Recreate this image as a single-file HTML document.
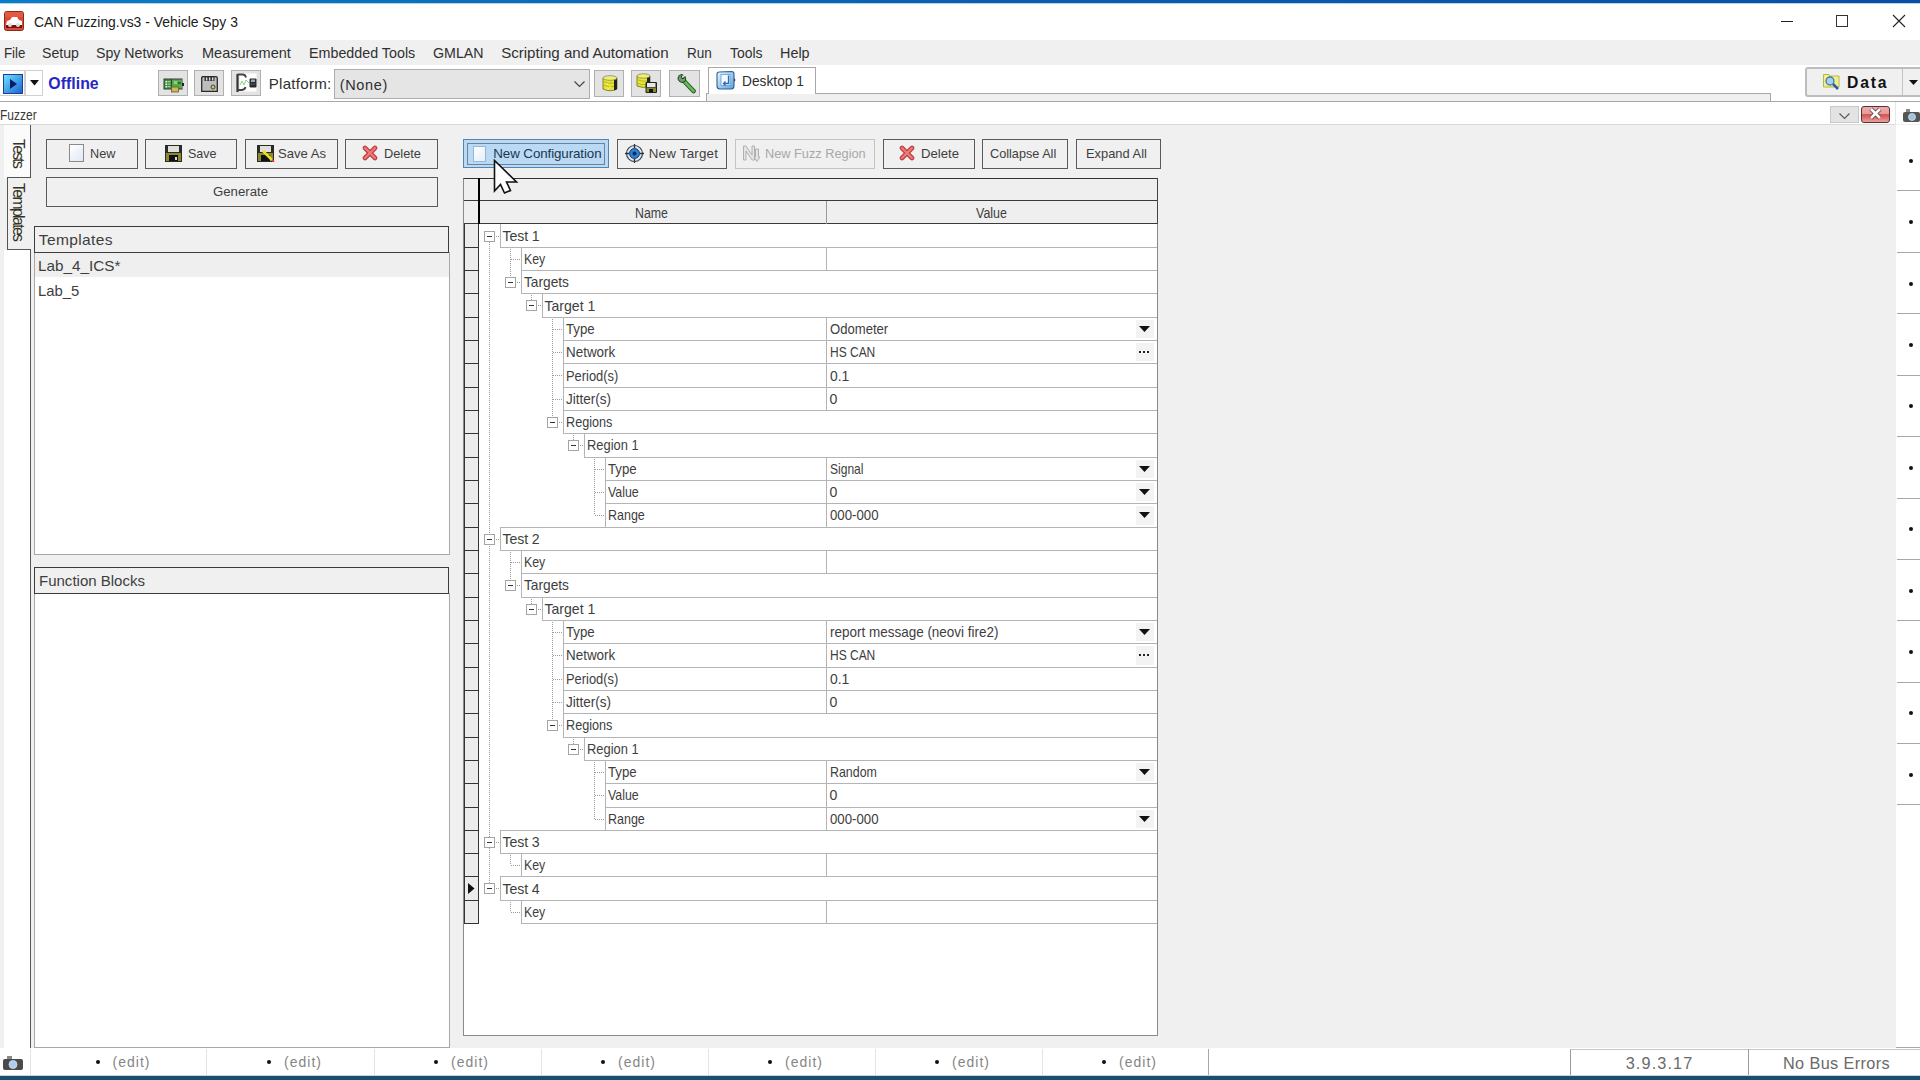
<!DOCTYPE html>
<html><head><meta charset="utf-8"><style>
html,body{margin:0;padding:0}
body{width:1920px;height:1080px;position:relative;overflow:hidden;background:#f0f0f0;font-family:"Liberation Sans",sans-serif}
.a{position:absolute}
.t{white-space:pre}
</style></head><body>
<div class="a" style="left:0px;top:0px;width:1920px;height:3px;background:linear-gradient(90deg,#0b7cc7,#0a5fb0 50%,#0a4ea6);"></div>
<div class="a" style="left:0px;top:3px;width:1920px;height:1px;background:#7fb4e0;opacity:.5"></div>
<div class="a" style="left:0px;top:4px;width:1920px;height:36px;background:#fff"></div>
<div class="a" style="left:0px;top:40px;width:1920px;height:25px;background:#f0f0f0"></div>
<div class="a" style="left:0px;top:65px;width:1920px;height:36px;background:#fff"></div>
<div class="a" style="left:0px;top:101px;width:1920px;height:1px;background:#a9a9a9"></div>
<div class="a" style="left:0px;top:102px;width:1920px;height:22px;background:#fff"></div>
<div class="a" style="left:0px;top:124px;width:1896px;height:1px;background:#dadada"></div>
<div class="a" style="left:0px;top:1048px;width:1920px;height:27px;background:#fff"></div>
<div class="a" style="left:0px;top:1075px;width:1920px;height:1px;background:#c9d3da"></div>
<div class="a" style="left:0px;top:1076px;width:1920px;height:4px;background:#1a4e6e"></div>
<svg class="a" style="left:4px;top:11px" width="20" height="20" viewBox="0 0 20 20">
<rect x="0.5" y="0.5" width="19" height="19" rx="2" fill="#dc4a38" stroke="#8a2a20" stroke-width="1"/>
<rect x="1" y="1" width="18" height="5" fill="#e45a40"/>
<path d="M2 14 L3 10 L6 9 L8 6 L13 6 L15 9 L18 10 L18 14 Z" fill="#fff"/>
<rect x="2" y="14" width="16" height="3" fill="#7a1010"/>
<circle cx="6" cy="14" r="2" fill="#ddd"/><circle cx="14" cy="14" r="2" fill="#ddd"/>
</svg>
<div class="a t" style="left:34.00px;top:14.00px;font-size:15.26px;line-height:15.26px;letter-spacing:0.000px;color:#1b1b1b;transform:scaleX(0.9111);transform-origin:0 0;">CAN Fuzzing.vs3 - Vehicle Spy 3</div>
<div class="a" style="left:1781px;top:21px;width:12px;height:1px;background:#222"></div>
<div class="a" style="left:1836px;top:15px;width:12px;height:12px;border:1px solid #333;box-sizing:border-box"></div>
<svg class="a" style="left:1892px;top:14px" width="14" height="14" viewBox="0 0 14 14"><path d="M1 1 L13 13 M13 1 L1 13" stroke="#222" stroke-width="1.1"/></svg>
<div class="a t" style="left:3.60px;top:45.00px;font-size:15.12px;line-height:15.12px;letter-spacing:0.000px;color:#303030;transform:scaleX(0.8784);transform-origin:0 0;">File</div>
<div class="a t" style="left:42.00px;top:45.00px;font-size:15.12px;line-height:15.12px;letter-spacing:0.000px;color:#303030;transform:scaleX(0.9365);transform-origin:0 0;">Setup</div>
<div class="a t" style="left:96.40px;top:45.00px;font-size:15.12px;line-height:15.12px;letter-spacing:0.000px;color:#303030;transform:scaleX(0.9382);transform-origin:0 0;">Spy Networks</div>
<div class="a t" style="left:202.10px;top:45.00px;font-size:15.12px;line-height:15.12px;letter-spacing:0.000px;color:#303030;transform:scaleX(0.9618);transform-origin:0 0;">Measurement</div>
<div class="a t" style="left:308.70px;top:45.00px;font-size:15.12px;line-height:15.12px;letter-spacing:0.000px;color:#303030;transform:scaleX(0.9461);transform-origin:0 0;">Embedded Tools</div>
<div class="a t" style="left:433.10px;top:45.00px;font-size:15.12px;line-height:15.12px;letter-spacing:0.000px;color:#303030;transform:scaleX(0.9411);transform-origin:0 0;">GMLAN</div>
<div class="a t" style="left:501.20px;top:45.00px;font-size:15.12px;line-height:15.12px;letter-spacing:-0.026px;color:#303030;">Scripting and Automation</div>
<div class="a t" style="left:686.70px;top:45.00px;font-size:15.12px;line-height:15.12px;letter-spacing:0.000px;color:#303030;transform:scaleX(0.8978);transform-origin:0 0;">Run</div>
<div class="a t" style="left:729.70px;top:45.00px;font-size:15.12px;line-height:15.12px;letter-spacing:0.000px;color:#303030;transform:scaleX(0.9236);transform-origin:0 0;">Tools</div>
<div class="a t" style="left:780.00px;top:45.00px;font-size:15.12px;line-height:15.12px;letter-spacing:0.000px;color:#303030;transform:scaleX(0.9519);transform-origin:0 0;">Help</div>
<div class="a" style="left:0px;top:70px;width:25px;height:26px;border:1px solid #d0d0d0;border-left:none;box-sizing:border-box;background:#fff"></div>
<div class="a" style="left:25px;top:70px;width:18px;height:26px;border:1px solid #d0d0d0;box-sizing:border-box;background:#fff"></div>
<svg class="a" style="left:3px;top:74px" width="20" height="20" viewBox="0 0 20 20">
<defs><linearGradient id="pg" x1="0" y1="0" x2="1" y2="1"><stop offset="0" stop-color="#6fe8ff"/><stop offset="1" stop-color="#1a5fd0"/></linearGradient></defs>
<rect x="0.5" y="0.5" width="19" height="19" fill="url(#pg)" stroke="#1a3f9a"/>
<path d="M7 5 L14 10 L7 15 Z" fill="#0a1a6a"/></svg>
<svg class="a" style="left:30px;top:80px" width="9" height="6" viewBox="0 0 9 6"><path d="M0 0 L9 0 L4.5 5.5 Z" fill="#111"/></svg>
<div class="a t" style="left:48.30px;top:76.00px;font-size:15.84px;line-height:15.84px;letter-spacing:0.041px;color:#2626c4;font-weight:bold;">Offline</div>
<div class="a" style="left:158px;top:70px;width:30px;height:26px;border:1px solid #b0b0b0;box-sizing:border-box;background:#e3e3e3"></div>
<div class="a" style="left:194px;top:70px;width:30px;height:26px;border:1px solid #b0b0b0;box-sizing:border-box;background:#e3e3e3"></div>
<div class="a" style="left:231px;top:70px;width:30px;height:26px;border:1px solid #b0b0b0;box-sizing:border-box;background:#e3e3e3"></div>
<svg class="a" style="left:163px;top:78px" width="22" height="15" viewBox="0 0 22 15">
<rect x="0.5" y="0.5" width="19" height="11" fill="#3a3a3a"/>
<rect x="1.5" y="1.5" width="6.5" height="9" fill="#3f8f3a"/>
<rect x="9" y="1.5" width="10" height="9" fill="#5aa84e"/>
<rect x="2.5" y="3" width="1.5" height="1.5" fill="#e8ffe8"/><rect x="2.5" y="5.5" width="1.5" height="1.5" fill="#e8ffe8"/><rect x="2.5" y="8" width="1.5" height="1.5" fill="#e8ffe8"/>
<rect x="4.5" y="3" width="3" height="1.2" fill="#9fd09a"/><rect x="4.5" y="5.5" width="3" height="1.2" fill="#9fd09a"/><rect x="4.5" y="8" width="3" height="1.2" fill="#9fd09a"/>
<rect x="11" y="3" width="3" height="3" fill="#8fcf80"/><rect x="15" y="4" width="3" height="2" fill="#2f6f2a"/>
<rect x="19" y="5" width="2" height="3" fill="#222"/>
<rect x="8.5" y="9" width="7" height="5" fill="#c8b860" stroke="#6a5a20" stroke-width=".8"/></svg>
<svg class="a" style="left:201px;top:76px" width="17" height="16" viewBox="0 0 17 16">
<path d="M1.5 0.7 H15 Q16.3 0.7 16.3 2 V15.3 H0.7 V1.5 Z" fill="#bdbdbd" stroke="#2a2a2a" stroke-width="1.3"/>
<rect x="3.5" y="1" width="10" height="4" fill="#3a3a3a"/><rect x="5" y="1.5" width="1.3" height="3" fill="#ddd"/><rect x="8" y="1.5" width="1.3" height="3" fill="#ddd"/><rect x="11" y="1.5" width="1.3" height="3" fill="#ddd"/>
<circle cx="12" cy="11" r="2" fill="#d8c850" stroke="#333" stroke-width=".9"/></svg>
<svg class="a" style="left:236px;top:73px" width="22" height="20" viewBox="0 0 22 20">
<rect x="3.5" y="0.5" width="17" height="18" fill="#fff"/>
<path d="M1.5 1 V19" stroke="#333" stroke-width="2.2"/>
<path d="M1.5 1.5 H7 Q9.5 1.8 10 4.5 M1.5 17 H6 Q9 16.5 9.5 14" stroke="#444" stroke-width="1.8" fill="none"/>
<path d="M4 12 L6 8 L8 12 L10 7 L13 10" stroke="#8ad08a" stroke-width="1" fill="none"/>
<rect x="13.5" y="5.5" width="7" height="9" rx="1" fill="#2a2a2a"/><rect x="15" y="6.5" width="4" height="2.5" fill="#9ab"/>
<rect x="15" y="10.5" width="1.2" height="1.2" fill="#68a"/><rect x="17.5" y="10.5" width="1.2" height="1.2" fill="#68a"/></svg>
<div class="a t" style="left:268.75px;top:76.00px;font-size:15.12px;line-height:15.12px;letter-spacing:0.251px;color:#303030;">Platform:</div>
<div class="a" style="left:334px;top:69px;width:256px;height:30px;border:1px solid #adadad;box-sizing:border-box;background:#e5e5e5"></div>
<div class="a t" style="left:339.80px;top:78.00px;font-size:14.53px;line-height:14.53px;letter-spacing:0.618px;color:#303030;">(None)</div>
<svg class="a" style="left:574px;top:81px" width="11" height="7" viewBox="0 0 11 7"><path d="M0.5 0.5 L5.5 5.5 L10.5 0.5" stroke="#444" stroke-width="1.2" fill="none"/></svg>
<div class="a" style="left:594px;top:70px;width:30px;height:27px;border:1px solid #b0b0b0;box-sizing:border-box;background:#e3e3e3"></div>
<div class="a" style="left:631px;top:70px;width:30px;height:27px;border:1px solid #b0b0b0;box-sizing:border-box;background:#e3e3e3"></div>
<div class="a" style="left:669px;top:70px;width:31px;height:27px;border:1px solid #b0b0b0;box-sizing:border-box;background:#e3e3e3"></div>
<svg class="a" style="left:602px;top:75px" width="16" height="17" viewBox="0 0 16 17">
<path d="M1 3 L1 14 Q8 17.5 15 14 L15 3 Z" fill="#e6e632" stroke="#5a5a10" stroke-width=".7"/>
<path d="M12 3.5 L15 3 L15 14 Q13.5 15 12 15.5 Z" fill="#222"/>
<ellipse cx="8" cy="3" rx="7" ry="2.3" fill="#f0f070" stroke="#777" stroke-width=".7"/>
<path d="M1 6.5 Q6 9 12 8 M1 10 Q6 12.5 12 11.5" stroke="#a8a820" stroke-width=".8" fill="none"/>
<path d="M4 8 L6 9.5 M7 11 L9 12.5 M5 12.5 L7 14" stroke="#fafa90" stroke-width=".9"/></svg>
<svg class="a" style="left:636px;top:73px" width="22" height="21" viewBox="0 0 22 21">
<path d="M1 3 L1 13 Q7 16 14 13 L14 3 Z" fill="#e6e632" stroke="#5a5a10" stroke-width=".7"/>
<path d="M11 3.5 L14 3 L14 13 L11 14 Z" fill="#222"/>
<ellipse cx="7.5" cy="3" rx="6.5" ry="2.2" fill="#f0f070" stroke="#777" stroke-width=".7"/>
<path d="M1 6.5 Q6 9 11 8 M1 10 Q6 12.5 11 11.5" stroke="#a8a820" stroke-width=".8" fill="none"/>
<rect x="9.5" y="9" width="11.5" height="11" rx="1" fill="#222"/>
<rect x="11" y="10" width="8.5" height="4" fill="#e8e8e8"/><rect x="10.5" y="14.5" width="9.5" height="4.5" fill="#8a8a2a"/>
<rect x="13" y="16" width="4" height="3" fill="#111"/></svg>
<svg class="a" style="left:676px;top:73px" width="20" height="21" viewBox="0 0 20 21">
<path d="M7 7 L17.5 18" stroke="#1f4a1a" stroke-width="4.6" stroke-linecap="round"/>
<path d="M7 7 L17.5 18" stroke="#62b85a" stroke-width="3" stroke-linecap="round"/>
<path d="M2.5 3 Q1 6.5 3.5 8.5 Q6 10.5 9 8.5 Q10.5 6 9 3.5 L7 6 L5 4.5 L6.5 1.5 Q4 1.5 2.5 3 Z" fill="#5ab050" stroke="#333" stroke-width="1"/>
<path d="M2.5 3 L4 4.5 M6.5 1.5 L7 3" stroke="#777" stroke-width="1.2"/></svg>
<div class="a" style="left:706px;top:93px;width:1065px;height:8px;border:1px solid #a8a8a8;border-bottom:none;box-sizing:border-box;background:#f0f0f0"></div>
<div class="a" style="left:708px;top:67px;width:108px;height:27px;border:1px solid #a8a8a8;border-bottom:none;box-sizing:border-box;background:#fff"></div>
<svg class="a" style="left:716px;top:70px" width="20" height="21" viewBox="0 0 20 21">
<defs><linearGradient id="dg" x1="0" y1="0" x2="1" y2="1"><stop offset="0" stop-color="#eef8ff"/><stop offset="1" stop-color="#5aa0dc"/></linearGradient></defs>
<path d="M3 2 Q1 2 1 4.5 V16 Q1 19 4 19 H15 Q18 19 18 16 V4 Q18 1.5 15.5 1.5 Z" fill="url(#dg)" stroke="#2a5f9a" stroke-width="1.1"/>
<rect x="5" y="4.5" width="9" height="11" fill="#f4f9ff" stroke="#6a9ad0" stroke-width=".8"/>
<path d="M12.5 5.5 V13.5 H8 M9.5 11.5 L7.5 13.5 L9.5 15.5" stroke="#2a6ab8" stroke-width="1.3" fill="none"/>
<path d="M18 8 L19.5 10 L18 12" fill="#335" /></svg>
<div class="a t" style="left:742.20px;top:74.00px;font-size:14.97px;line-height:14.97px;letter-spacing:0.000px;color:#303030;transform:scaleX(0.9184);transform-origin:0 0;">Desktop 1</div>
<div class="a" style="left:1805px;top:67px;width:125px;height:30px;border:2px solid #bdbdbd;border-radius:3px;box-sizing:border-box;background:#f0f0f0"></div>
<div class="a" style="left:1902px;top:69px;width:1px;height:26px;background:#c4c4c4"></div>
<svg class="a" style="left:1909px;top:80px" width="9" height="5" viewBox="0 0 9 5"><path d="M0 0 L9 0 L4.5 5 Z" fill="#111"/></svg>
<svg class="a" style="left:1823px;top:73px" width="18" height="18" viewBox="0 0 18 18">
<path d="M0.5 1.5 L6 1.5 L7 3 L16 3 L16 14 L0.5 14 Z" fill="#f0f090" stroke="#b8b840" stroke-width="1"/>
<circle cx="7" cy="8" r="4" fill="#a8d0f0" stroke="#4a7a9a" stroke-width="1.3"/>
<path d="M10 11 L15 16" stroke="#2a5ab0" stroke-width="2.5"/></svg>
<div class="a t" style="left:1847.00px;top:75.00px;font-size:15.70px;line-height:15.70px;letter-spacing:1.824px;color:#111;font-weight:bold;">Data</div>
<div class="a t" style="left:0.00px;top:108.00px;font-size:14.83px;line-height:14.83px;letter-spacing:0.000px;color:#3a3a3a;transform:scaleX(0.8098);transform-origin:0 0;">Fuzzer</div>
<div class="a" style="left:1830px;top:106px;width:29px;height:17px;border:1px solid #c8c8c8;box-sizing:border-box;background:#e3e3e3"></div>
<svg class="a" style="left:1839px;top:113px" width="11" height="7" viewBox="0 0 11 7"><path d="M0.5 0.5 L5.5 5.5 L10.5 0.5" stroke="#555" stroke-width="1.1" fill="none"/></svg>
<div class="a" style="left:1861px;top:106px;width:29px;height:17px;border:1px solid #5a3030;border-radius:3px;box-sizing:border-box;background:linear-gradient(#eeaaaa,#e79a9a 45%,#d45a5a 50%,#d86060 62%,#eaa0a0)"></div>
<svg class="a" style="left:1868px;top:107px" width="15" height="13" viewBox="0 0 15 13"><path d="M3 2 L12 11 M12 2 L3 11" stroke="#5a3a3a" stroke-width="4.2"/><path d="M3 2 L12 11 M12 2 L3 11" stroke="#fff" stroke-width="2.6"/></svg>
<div class="a" style="left:1895px;top:102px;width:1px;height:23px;background:#e6e6e6"></div>
<svg class="a" style="left:1903px;top:109px" width="17" height="14" viewBox="0 0 17 14">
<rect x="3" y="0" width="4" height="3" fill="#888"/><rect x="0" y="3" width="17" height="10" rx="2" fill="#555"/>
<circle cx="9" cy="8" r="3.5" fill="#9cc4e8" stroke="#ddd" stroke-width=".8"/></svg>
<div class="a" style="left:4px;top:125px;width:26px;height:53px;background:#fbfbfb"></div>
<div class="a" style="left:30px;top:125px;width:1px;height:53px;background:#555"></div>
<div class="a" style="left:7px;top:177px;width:24px;height:1px;background:#555"></div>
<div class="a" style="left:7px;top:177px;width:1px;height:73px;background:#555"></div>
<div class="a" style="left:8px;top:178px;width:23px;height:71px;background:#f0f0f0"></div>
<div class="a" style="left:7px;top:249px;width:24px;height:1px;background:#555"></div>
<div class="a" style="left:4px;top:250px;width:26px;height:798px;background:#fff"></div>
<div class="a" style="left:30px;top:250px;width:1px;height:798px;background:#555"></div>
<div class="a t" style="left:26.09px;top:139.40px;transform:rotate(90deg);transform-origin:0 0;font-size:15.70px;line-height:15.70px;letter-spacing:-1.686px;color:#33331f;">Tests</div>
<div class="a t" style="left:26.09px;top:183.20px;transform:rotate(90deg);transform-origin:0 0;font-size:15.70px;line-height:15.70px;letter-spacing:-1.569px;color:#33331f;">Templates</div>
<div class="a" style="left:46px;top:139px;width:92px;height:30px;border:1px solid #5a5a5a;background:#f0f0f0;box-sizing:border-box"></div>
<div class="a" style="left:145px;top:139px;width:92px;height:30px;border:1px solid #5a5a5a;background:#f0f0f0;box-sizing:border-box"></div>
<div class="a" style="left:245px;top:139px;width:93px;height:30px;border:1px solid #5a5a5a;background:#f0f0f0;box-sizing:border-box"></div>
<div class="a" style="left:345px;top:139px;width:93px;height:30px;border:1px solid #5a5a5a;background:#f0f0f0;box-sizing:border-box"></div>
<div class="a" style="left:46px;top:177px;width:392px;height:30px;border:1px solid #5a5a5a;background:#f0f0f0;box-sizing:border-box"></div>
<div class="a" style="left:69px;top:144px;width:15px;height:18px;border:1px solid #8a8a8a;box-sizing:border-box;background:linear-gradient(135deg,#ffffff,#dfe8f4)"></div>
<div class="a t" style="left:90.40px;top:147.00px;font-size:13.37px;line-height:13.37px;letter-spacing:0.000px;color:#3e3e3e;transform:scaleX(0.9497);transform-origin:0 0;">New</div>
<svg class="a" style="left:165px;top:145px" width="17" height="17" viewBox="0 0 17 17">
<rect x="0" y="0" width="17" height="17" fill="#2a2a2a"/><rect x="1" y="8" width="15" height="8" fill="#8a8a2a"/>
<rect x="3" y="1" width="11" height="6" fill="#e0e0d8"/><rect x="4" y="10" width="9" height="6" fill="#111"/>
<rect x="10" y="12" width="2" height="3" fill="#ddd"/></svg>
<div class="a t" style="left:187.50px;top:147.00px;font-size:13.37px;line-height:13.37px;letter-spacing:0.000px;color:#3e3e3e;transform:scaleX(0.9352);transform-origin:0 0;">Save</div>
<svg class="a" style="left:257px;top:145px" width="18" height="17" viewBox="0 0 18 17">
<rect x="0" y="0" width="17" height="17" fill="#2a2a2a"/><rect x="1" y="8" width="15" height="8" fill="#8a8a2a"/>
<rect x="3" y="1" width="11" height="6" fill="#e0e0d8"/><rect x="4" y="10" width="9" height="6" fill="#111"/>
<path d="M6 6 L15 15" stroke="#e8e020" stroke-width="2.5"/><path d="M15 15 L17 17" stroke="#e04040" stroke-width="2"/></svg>
<div class="a t" style="left:278.00px;top:147.00px;font-size:13.37px;line-height:13.37px;letter-spacing:0.000px;color:#3e3e3e;transform:scaleX(0.9785);transform-origin:0 0;">Save As</div>
<svg class="a" style="left:362px;top:145px" width="16" height="16" viewBox="0 0 16 16">
<path d="M3 3 L13 13 M13 3 L3 13" stroke="#c04040" stroke-width="4.6" stroke-linecap="round"/>
<path d="M3 3 L13 13 M13 3 L3 13" stroke="#ee7a7a" stroke-width="2.2" stroke-linecap="round"/></svg>
<div class="a t" style="left:384.00px;top:147.00px;font-size:13.37px;line-height:13.37px;letter-spacing:0.000px;color:#3e3e3e;transform:scaleX(0.9574);transform-origin:0 0;">Delete</div>
<div class="a t" style="left:213.00px;top:185.00px;font-size:13.66px;line-height:13.66px;letter-spacing:0.000px;color:#3e3e3e;transform:scaleX(0.9658);transform-origin:0 0;">Generate</div>
<div class="a" style="left:34px;top:252px;width:416px;height:303px;border:1px solid #a8a8a8;border-top:none;box-sizing:border-box;background:#fff"></div>
<div class="a" style="left:35px;top:253px;width:414px;height:24px;background:#efefef"></div>
<div class="a" style="left:34px;top:226px;width:415px;height:27px;border:1px solid #3c3c3c;box-sizing:border-box;background:#f0f0f0"></div>
<div class="a t" style="left:38.75px;top:232.00px;font-size:15.55px;line-height:15.55px;letter-spacing:0.360px;color:#3e3e3e;">Templates</div>
<div class="a t" style="left:37.50px;top:258.00px;font-size:15.55px;line-height:15.55px;letter-spacing:0.000px;color:#3e3e3e;transform:scaleX(0.9838);transform-origin:0 0;">Lab_4_ICS*</div>
<div class="a t" style="left:37.50px;top:283.00px;font-size:15.55px;line-height:15.55px;letter-spacing:0.000px;color:#3e3e3e;transform:scaleX(0.9541);transform-origin:0 0;">Lab_5</div>
<div class="a" style="left:34px;top:593px;width:416px;height:455px;border:1px solid #a8a8a8;border-top:none;box-sizing:border-box;background:#fff"></div>
<div class="a" style="left:34px;top:567px;width:415px;height:27px;border:1px solid #3c3c3c;box-sizing:border-box;background:#f0f0f0"></div>
<div class="a t" style="left:39.00px;top:573.00px;font-size:15.55px;line-height:15.55px;letter-spacing:0.000px;color:#3e3e3e;transform:scaleX(0.9658);transform-origin:0 0;">Function Blocks</div>
<div class="a" style="left:463px;top:139px;width:146px;height:29px;border:1px solid #4f86b8;background:#b9d9f5;box-sizing:border-box"></div>
<div class="a" style="left:467px;top:143px;width:138px;height:22px;border:1px solid rgba(50,60,70,.55);box-sizing:border-box"></div>
<div class="a" style="left:473px;top:146px;width:13px;height:16px;border:1px solid #9ab8d4;box-sizing:border-box;background:linear-gradient(135deg,#fff,#e6eef8)"></div>
<div class="a t" style="left:493.30px;top:147.00px;font-size:13.37px;line-height:13.37px;letter-spacing:-0.099px;color:#1c3550;">New Configuration</div>
<div class="a" style="left:617px;top:139px;width:110px;height:30px;border:1px solid #5a5a5a;background:#f0f0f0;box-sizing:border-box"></div>
<svg class="a" style="left:625px;top:144px" width="19" height="19" viewBox="0 0 19 19">
<circle cx="9.5" cy="9.5" r="8" fill="#dfe8f0" stroke="#3a4a5a" stroke-width="1.2"/>
<circle cx="9.5" cy="9.5" r="5" fill="#2f7fd0" stroke="#1a3a6a" stroke-width="1"/>
<circle cx="9.5" cy="9.5" r="2" fill="#0a2a6a"/>
<path d="M9.5 0 V4 M9.5 15 V19 M0 9.5 H4 M15 9.5 H19" stroke="#333" stroke-width="1.3"/></svg>
<div class="a t" style="left:648.75px;top:147.00px;font-size:13.37px;line-height:13.37px;letter-spacing:0.208px;color:#3e3e3e;">New Target</div>
<div class="a" style="left:735px;top:139px;width:140px;height:30px;border:1px solid #c4c4c4;background:#f0f0f0;box-sizing:border-box"></div>
<svg class="a" style="left:742px;top:145px" width="18" height="18" viewBox="0 0 18 18">
<path d="M1.5 1 H4 L10 10 V1 H12.5 V15 H10 L4 6 V15 H1.5 Z" fill="#e4e4e4" stroke="#b0b0b0" stroke-width="1"/>
<path d="M13.5 4 V12 H12 L15 16.5 L18 12 H16.5 V4 Z" fill="#e4e4e4" stroke="#b0b0b0" stroke-width="1"/></svg>
<div class="a t" style="left:765.00px;top:147.00px;font-size:13.37px;line-height:13.37px;letter-spacing:0.000px;color:#a8a8a8;transform:scaleX(0.9553);transform-origin:0 0;">New Fuzz Region</div>
<div class="a" style="left:883px;top:139px;width:92px;height:30px;border:1px solid #5a5a5a;background:#f0f0f0;box-sizing:border-box"></div>
<svg class="a" style="left:899px;top:145px" width="16" height="16" viewBox="0 0 16 16">
<path d="M3 3 L13 13 M13 3 L3 13" stroke="#c04040" stroke-width="4.6" stroke-linecap="round"/>
<path d="M3 3 L13 13 M13 3 L3 13" stroke="#ee7a7a" stroke-width="2.2" stroke-linecap="round"/></svg>
<div class="a t" style="left:921.00px;top:147.00px;font-size:13.37px;line-height:13.37px;letter-spacing:0.000px;color:#3e3e3e;transform:scaleX(0.9833);transform-origin:0 0;">Delete</div>
<div class="a" style="left:982px;top:139px;width:86px;height:30px;border:1px solid #5a5a5a;background:#f0f0f0;box-sizing:border-box"></div>
<div class="a t" style="left:990.00px;top:147.00px;font-size:13.37px;line-height:13.37px;letter-spacing:0.000px;color:#3e3e3e;transform:scaleX(0.9491);transform-origin:0 0;">Collapse All</div>
<div class="a" style="left:1076px;top:139px;width:85px;height:30px;border:1px solid #5a5a5a;background:#f0f0f0;box-sizing:border-box"></div>
<div class="a t" style="left:1085.60px;top:147.00px;font-size:13.37px;line-height:13.37px;letter-spacing:0.000px;color:#3e3e3e;transform:scaleX(0.9639);transform-origin:0 0;">Expand All</div>
<div class="a" style="left:463px;top:178px;width:695px;height:858px;border:1px solid #8a8a8a;border-top:1px solid #333;box-sizing:border-box;background:#fff"></div>
<div class="a" style="left:1157px;top:178px;width:1px;height:46px;background:#444"></div>
<div class="a" style="left:464px;top:179px;width:693px;height:21px;background:#efefef"></div>
<div class="a" style="left:464px;top:200px;width:693px;height:1px;background:#3a3a3a"></div>
<div class="a" style="left:479px;top:201px;width:678px;height:23px;background:#efefef"></div>
<div class="a" style="left:464px;top:201px;width:14px;height:23px;background:#efefef"></div>
<div class="a" style="left:464px;top:223px;width:693px;height:1px;background:#3a3a3a"></div>
<div class="a" style="left:478px;top:178px;width:2px;height:46px;background:#000"></div>
<div class="a" style="left:826px;top:201px;width:1px;height:23px;background:#9a9a9a"></div>
<div class="a t" style="left:635.00px;top:207.00px;font-size:13.95px;line-height:13.95px;letter-spacing:0.000px;color:#3e3e3e;transform:scaleX(0.8869);transform-origin:0 0;">Name</div>
<div class="a t" style="left:975.50px;top:207.00px;font-size:13.95px;line-height:13.95px;letter-spacing:0.000px;color:#3e3e3e;transform:scaleX(0.8949);transform-origin:0 0;">Value</div>
<div class="a" style="left:465px;top:224px;width:13px;height:23px;background:#ececec"></div>
<div class="a" style="left:465px;top:247px;width:13px;height:23px;background:#ececec"></div>
<div class="a" style="left:465px;top:270px;width:13px;height:23px;background:#ececec"></div>
<div class="a" style="left:465px;top:293px;width:13px;height:24px;background:#ececec"></div>
<div class="a" style="left:465px;top:317px;width:13px;height:23px;background:#ececec"></div>
<div class="a" style="left:465px;top:340px;width:13px;height:23px;background:#ececec"></div>
<div class="a" style="left:465px;top:363px;width:13px;height:24px;background:#ececec"></div>
<div class="a" style="left:465px;top:387px;width:13px;height:23px;background:#ececec"></div>
<div class="a" style="left:465px;top:410px;width:13px;height:23px;background:#ececec"></div>
<div class="a" style="left:465px;top:433px;width:13px;height:24px;background:#ececec"></div>
<div class="a" style="left:465px;top:457px;width:13px;height:23px;background:#ececec"></div>
<div class="a" style="left:465px;top:480px;width:13px;height:23px;background:#ececec"></div>
<div class="a" style="left:465px;top:503px;width:13px;height:24px;background:#ececec"></div>
<div class="a" style="left:465px;top:527px;width:13px;height:23px;background:#ececec"></div>
<div class="a" style="left:465px;top:550px;width:13px;height:23px;background:#ececec"></div>
<div class="a" style="left:465px;top:573px;width:13px;height:24px;background:#ececec"></div>
<div class="a" style="left:465px;top:597px;width:13px;height:23px;background:#ececec"></div>
<div class="a" style="left:465px;top:620px;width:13px;height:23px;background:#ececec"></div>
<div class="a" style="left:465px;top:643px;width:13px;height:24px;background:#ececec"></div>
<div class="a" style="left:465px;top:667px;width:13px;height:23px;background:#ececec"></div>
<div class="a" style="left:465px;top:690px;width:13px;height:23px;background:#ececec"></div>
<div class="a" style="left:465px;top:713px;width:13px;height:24px;background:#ececec"></div>
<div class="a" style="left:465px;top:737px;width:13px;height:23px;background:#ececec"></div>
<div class="a" style="left:465px;top:760px;width:13px;height:23px;background:#ececec"></div>
<div class="a" style="left:465px;top:783px;width:13px;height:24px;background:#ececec"></div>
<div class="a" style="left:465px;top:807px;width:13px;height:23px;background:#ececec"></div>
<div class="a" style="left:465px;top:830px;width:13px;height:23px;background:#ececec"></div>
<div class="a" style="left:465px;top:853px;width:13px;height:23px;background:#ececec"></div>
<div class="a" style="left:465px;top:876px;width:13px;height:24px;background:#ececec"></div>
<div class="a" style="left:465px;top:900px;width:13px;height:23px;background:#ececec"></div>
<div class="a" style="left:464px;top:247px;width:15px;height:1px;background:#333"></div>
<div class="a" style="left:464px;top:270px;width:15px;height:1px;background:#333"></div>
<div class="a" style="left:464px;top:293px;width:15px;height:1px;background:#333"></div>
<div class="a" style="left:464px;top:317px;width:15px;height:1px;background:#333"></div>
<div class="a" style="left:464px;top:340px;width:15px;height:1px;background:#333"></div>
<div class="a" style="left:464px;top:363px;width:15px;height:1px;background:#333"></div>
<div class="a" style="left:464px;top:387px;width:15px;height:1px;background:#333"></div>
<div class="a" style="left:464px;top:410px;width:15px;height:1px;background:#333"></div>
<div class="a" style="left:464px;top:433px;width:15px;height:1px;background:#333"></div>
<div class="a" style="left:464px;top:457px;width:15px;height:1px;background:#333"></div>
<div class="a" style="left:464px;top:480px;width:15px;height:1px;background:#333"></div>
<div class="a" style="left:464px;top:503px;width:15px;height:1px;background:#333"></div>
<div class="a" style="left:464px;top:527px;width:15px;height:1px;background:#333"></div>
<div class="a" style="left:464px;top:550px;width:15px;height:1px;background:#333"></div>
<div class="a" style="left:464px;top:573px;width:15px;height:1px;background:#333"></div>
<div class="a" style="left:464px;top:597px;width:15px;height:1px;background:#333"></div>
<div class="a" style="left:464px;top:620px;width:15px;height:1px;background:#333"></div>
<div class="a" style="left:464px;top:643px;width:15px;height:1px;background:#333"></div>
<div class="a" style="left:464px;top:667px;width:15px;height:1px;background:#333"></div>
<div class="a" style="left:464px;top:690px;width:15px;height:1px;background:#333"></div>
<div class="a" style="left:464px;top:713px;width:15px;height:1px;background:#333"></div>
<div class="a" style="left:464px;top:737px;width:15px;height:1px;background:#333"></div>
<div class="a" style="left:464px;top:760px;width:15px;height:1px;background:#333"></div>
<div class="a" style="left:464px;top:783px;width:15px;height:1px;background:#333"></div>
<div class="a" style="left:464px;top:807px;width:15px;height:1px;background:#333"></div>
<div class="a" style="left:464px;top:830px;width:15px;height:1px;background:#333"></div>
<div class="a" style="left:464px;top:853px;width:15px;height:1px;background:#333"></div>
<div class="a" style="left:464px;top:876px;width:15px;height:1px;background:#333"></div>
<div class="a" style="left:464px;top:900px;width:15px;height:1px;background:#333"></div>
<div class="a" style="left:464px;top:923px;width:15px;height:1px;background:#333"></div>
<div class="a" style="left:464px;top:224px;width:1px;height:700px;background:#333"></div>
<div class="a" style="left:478px;top:224px;width:1px;height:700px;background:#333"></div>
<svg class="a" style="left:468px;top:883px" width="7" height="11" viewBox="0 0 7 11"><path d="M0 0 L6.5 5.5 L0 11 Z" fill="#111"/></svg>
<div class="a" style="left:489px;top:236px;width:1px;height:652px;background:repeating-linear-gradient(180deg,#9a9a9a 0 1px,transparent 1px 2px)"></div>
<div class="a" style="left:510px;top:249px;width:1px;height:33px;background:repeating-linear-gradient(180deg,#9a9a9a 0 1px,transparent 1px 2px)"></div>
<div class="a" style="left:531px;top:295px;width:1px;height:10px;background:repeating-linear-gradient(180deg,#9a9a9a 0 1px,transparent 1px 2px)"></div>
<div class="a" style="left:552px;top:319px;width:1px;height:103px;background:repeating-linear-gradient(180deg,#9a9a9a 0 1px,transparent 1px 2px)"></div>
<div class="a" style="left:573px;top:435px;width:1px;height:10px;background:repeating-linear-gradient(180deg,#9a9a9a 0 1px,transparent 1px 2px)"></div>
<div class="a" style="left:594px;top:459px;width:1px;height:56px;background:repeating-linear-gradient(180deg,#9a9a9a 0 1px,transparent 1px 2px)"></div>
<div class="a" style="left:510px;top:552px;width:1px;height:33px;background:repeating-linear-gradient(180deg,#9a9a9a 0 1px,transparent 1px 2px)"></div>
<div class="a" style="left:531px;top:599px;width:1px;height:10px;background:repeating-linear-gradient(180deg,#9a9a9a 0 1px,transparent 1px 2px)"></div>
<div class="a" style="left:552px;top:622px;width:1px;height:103px;background:repeating-linear-gradient(180deg,#9a9a9a 0 1px,transparent 1px 2px)"></div>
<div class="a" style="left:573px;top:739px;width:1px;height:10px;background:repeating-linear-gradient(180deg,#9a9a9a 0 1px,transparent 1px 2px)"></div>
<div class="a" style="left:594px;top:762px;width:1px;height:57px;background:repeating-linear-gradient(180deg,#9a9a9a 0 1px,transparent 1px 2px)"></div>
<div class="a" style="left:510px;top:855px;width:1px;height:10px;background:repeating-linear-gradient(180deg,#9a9a9a 0 1px,transparent 1px 2px)"></div>
<div class="a" style="left:510px;top:902px;width:1px;height:10px;background:repeating-linear-gradient(180deg,#9a9a9a 0 1px,transparent 1px 2px)"></div>
<div class="a" style="left:490px;top:236px;width:10px;height:1px;background:repeating-linear-gradient(90deg,#9a9a9a 0 1px,transparent 1px 2px)"></div>
<div class="a" style="left:511px;top:259px;width:10px;height:1px;background:repeating-linear-gradient(90deg,#9a9a9a 0 1px,transparent 1px 2px)"></div>
<div class="a" style="left:511px;top:282px;width:10px;height:1px;background:repeating-linear-gradient(90deg,#9a9a9a 0 1px,transparent 1px 2px)"></div>
<div class="a" style="left:532px;top:305px;width:10px;height:1px;background:repeating-linear-gradient(90deg,#9a9a9a 0 1px,transparent 1px 2px)"></div>
<div class="a" style="left:553px;top:329px;width:10px;height:1px;background:repeating-linear-gradient(90deg,#9a9a9a 0 1px,transparent 1px 2px)"></div>
<div class="a" style="left:553px;top:352px;width:10px;height:1px;background:repeating-linear-gradient(90deg,#9a9a9a 0 1px,transparent 1px 2px)"></div>
<div class="a" style="left:553px;top:375px;width:10px;height:1px;background:repeating-linear-gradient(90deg,#9a9a9a 0 1px,transparent 1px 2px)"></div>
<div class="a" style="left:553px;top:399px;width:10px;height:1px;background:repeating-linear-gradient(90deg,#9a9a9a 0 1px,transparent 1px 2px)"></div>
<div class="a" style="left:553px;top:422px;width:10px;height:1px;background:repeating-linear-gradient(90deg,#9a9a9a 0 1px,transparent 1px 2px)"></div>
<div class="a" style="left:574px;top:445px;width:10px;height:1px;background:repeating-linear-gradient(90deg,#9a9a9a 0 1px,transparent 1px 2px)"></div>
<div class="a" style="left:595px;top:469px;width:10px;height:1px;background:repeating-linear-gradient(90deg,#9a9a9a 0 1px,transparent 1px 2px)"></div>
<div class="a" style="left:595px;top:492px;width:10px;height:1px;background:repeating-linear-gradient(90deg,#9a9a9a 0 1px,transparent 1px 2px)"></div>
<div class="a" style="left:595px;top:515px;width:10px;height:1px;background:repeating-linear-gradient(90deg,#9a9a9a 0 1px,transparent 1px 2px)"></div>
<div class="a" style="left:490px;top:539px;width:10px;height:1px;background:repeating-linear-gradient(90deg,#9a9a9a 0 1px,transparent 1px 2px)"></div>
<div class="a" style="left:511px;top:562px;width:10px;height:1px;background:repeating-linear-gradient(90deg,#9a9a9a 0 1px,transparent 1px 2px)"></div>
<div class="a" style="left:511px;top:585px;width:10px;height:1px;background:repeating-linear-gradient(90deg,#9a9a9a 0 1px,transparent 1px 2px)"></div>
<div class="a" style="left:532px;top:609px;width:10px;height:1px;background:repeating-linear-gradient(90deg,#9a9a9a 0 1px,transparent 1px 2px)"></div>
<div class="a" style="left:553px;top:632px;width:10px;height:1px;background:repeating-linear-gradient(90deg,#9a9a9a 0 1px,transparent 1px 2px)"></div>
<div class="a" style="left:553px;top:655px;width:10px;height:1px;background:repeating-linear-gradient(90deg,#9a9a9a 0 1px,transparent 1px 2px)"></div>
<div class="a" style="left:553px;top:679px;width:10px;height:1px;background:repeating-linear-gradient(90deg,#9a9a9a 0 1px,transparent 1px 2px)"></div>
<div class="a" style="left:553px;top:702px;width:10px;height:1px;background:repeating-linear-gradient(90deg,#9a9a9a 0 1px,transparent 1px 2px)"></div>
<div class="a" style="left:553px;top:725px;width:10px;height:1px;background:repeating-linear-gradient(90deg,#9a9a9a 0 1px,transparent 1px 2px)"></div>
<div class="a" style="left:574px;top:749px;width:10px;height:1px;background:repeating-linear-gradient(90deg,#9a9a9a 0 1px,transparent 1px 2px)"></div>
<div class="a" style="left:595px;top:772px;width:10px;height:1px;background:repeating-linear-gradient(90deg,#9a9a9a 0 1px,transparent 1px 2px)"></div>
<div class="a" style="left:595px;top:795px;width:10px;height:1px;background:repeating-linear-gradient(90deg,#9a9a9a 0 1px,transparent 1px 2px)"></div>
<div class="a" style="left:595px;top:819px;width:10px;height:1px;background:repeating-linear-gradient(90deg,#9a9a9a 0 1px,transparent 1px 2px)"></div>
<div class="a" style="left:490px;top:842px;width:10px;height:1px;background:repeating-linear-gradient(90deg,#9a9a9a 0 1px,transparent 1px 2px)"></div>
<div class="a" style="left:511px;top:865px;width:10px;height:1px;background:repeating-linear-gradient(90deg,#9a9a9a 0 1px,transparent 1px 2px)"></div>
<div class="a" style="left:490px;top:888px;width:10px;height:1px;background:repeating-linear-gradient(90deg,#9a9a9a 0 1px,transparent 1px 2px)"></div>
<div class="a" style="left:511px;top:912px;width:10px;height:1px;background:repeating-linear-gradient(90deg,#9a9a9a 0 1px,transparent 1px 2px)"></div>
<div class="a" style="left:500px;top:224px;width:657px;height:24px;border-left:1px solid #b4b4b4;border-bottom:1px solid #b4b4b4;box-sizing:border-box"></div>
<div class="a" style="left:484px;top:231px;width:11px;height:11px;border:1px solid #a4a4a4;box-sizing:border-box;background:#fff"></div>
<div class="a" style="left:487px;top:236px;width:5px;height:1px;background:#333"></div>
<div class="a t" style="left:502.50px;top:229.00px;font-size:14.10px;line-height:14.10px;letter-spacing:-0.083px;color:#3e3e3e;">Test 1</div>
<div class="a" style="left:521px;top:247px;width:636px;height:24px;border-left:1px solid #b4b4b4;border-bottom:1px solid #b4b4b4;box-sizing:border-box"></div>
<div class="a t" style="left:523.50px;top:252.00px;font-size:14.10px;line-height:14.10px;letter-spacing:0.000px;color:#3e3e3e;transform:scaleX(0.8746);transform-origin:0 0;">Key</div>
<div class="a" style="left:826px;top:247px;width:1px;height:23px;background:#b4b4b4"></div>
<div class="a" style="left:521px;top:270px;width:636px;height:24px;border-left:1px solid #b4b4b4;border-bottom:1px solid #b4b4b4;box-sizing:border-box"></div>
<div class="a" style="left:505px;top:277px;width:11px;height:11px;border:1px solid #a4a4a4;box-sizing:border-box;background:#fff"></div>
<div class="a" style="left:508px;top:282px;width:5px;height:1px;background:#333"></div>
<div class="a t" style="left:523.50px;top:275.00px;font-size:14.10px;line-height:14.10px;letter-spacing:0.000px;color:#3e3e3e;transform:scaleX(0.9733);transform-origin:0 0;">Targets</div>
<div class="a" style="left:542px;top:293px;width:615px;height:25px;border-left:1px solid #b4b4b4;border-bottom:1px solid #b4b4b4;box-sizing:border-box"></div>
<div class="a" style="left:526px;top:300px;width:11px;height:11px;border:1px solid #a4a4a4;box-sizing:border-box;background:#fff"></div>
<div class="a" style="left:529px;top:305px;width:5px;height:1px;background:#333"></div>
<div class="a t" style="left:544.50px;top:299.00px;font-size:14.10px;line-height:14.10px;letter-spacing:-0.020px;color:#3e3e3e;">Target 1</div>
<div class="a" style="left:563px;top:317px;width:594px;height:24px;border-left:1px solid #b4b4b4;border-bottom:1px solid #b4b4b4;box-sizing:border-box"></div>
<div class="a t" style="left:565.50px;top:322.00px;font-size:14.10px;line-height:14.10px;letter-spacing:0.000px;color:#3e3e3e;transform:scaleX(0.9389);transform-origin:0 0;">Type</div>
<div class="a" style="left:826px;top:317px;width:1px;height:23px;background:#b4b4b4"></div>
<div class="a t" style="left:829.60px;top:322.00px;font-size:14.10px;line-height:14.10px;letter-spacing:0.000px;color:#3e3e3e;transform:scaleX(0.9284);transform-origin:0 0;">Odometer</div>
<div class="a" style="left:1136px;top:320px;width:18px;height:18px;background:#f3f3f3"></div>
<svg class="a" style="left:1139px;top:326px" width="11" height="6" viewBox="0 0 11 6"><path d="M0 0 L11 0 L5.5 6 Z" fill="#111"/></svg>
<div class="a" style="left:563px;top:340px;width:594px;height:24px;border-left:1px solid #b4b4b4;border-bottom:1px solid #b4b4b4;box-sizing:border-box"></div>
<div class="a t" style="left:565.50px;top:345.00px;font-size:14.10px;line-height:14.10px;letter-spacing:0.000px;color:#3e3e3e;transform:scaleX(0.9534);transform-origin:0 0;">Network</div>
<div class="a" style="left:826px;top:340px;width:1px;height:23px;background:#b4b4b4"></div>
<div class="a t" style="left:829.60px;top:345.00px;font-size:14.10px;line-height:14.10px;letter-spacing:0.000px;color:#3e3e3e;transform:scaleX(0.8503);transform-origin:0 0;">HS CAN</div>
<div class="a" style="left:1136px;top:343px;width:18px;height:18px;background:#f3f3f3"></div>
<div class="a" style="left:1139px;top:351px;width:2px;height:2px;background:#222"></div>
<div class="a" style="left:1143px;top:351px;width:2px;height:2px;background:#222"></div>
<div class="a" style="left:1147px;top:351px;width:2px;height:2px;background:#222"></div>
<div class="a" style="left:563px;top:363px;width:594px;height:25px;border-left:1px solid #b4b4b4;border-bottom:1px solid #b4b4b4;box-sizing:border-box"></div>
<div class="a t" style="left:565.50px;top:369.00px;font-size:14.10px;line-height:14.10px;letter-spacing:0.000px;color:#3e3e3e;transform:scaleX(0.9144);transform-origin:0 0;">Period(s)</div>
<div class="a" style="left:826px;top:363px;width:1px;height:24px;background:#b4b4b4"></div>
<div class="a t" style="left:829.60px;top:369.00px;font-size:14.10px;line-height:14.10px;letter-spacing:0.000px;color:#3e3e3e;transform:scaleX(0.9847);transform-origin:0 0;">0.1</div>
<div class="a" style="left:563px;top:387px;width:594px;height:24px;border-left:1px solid #b4b4b4;border-bottom:1px solid #b4b4b4;box-sizing:border-box"></div>
<div class="a t" style="left:565.50px;top:392.00px;font-size:14.10px;line-height:14.10px;letter-spacing:0.000px;color:#3e3e3e;transform:scaleX(0.9576);transform-origin:0 0;">Jitter(s)</div>
<div class="a" style="left:826px;top:387px;width:1px;height:23px;background:#b4b4b4"></div>
<div class="a t" style="left:829.60px;top:392.00px;font-size:14.10px;line-height:14.10px;letter-spacing:0.000px;color:#3e3e3e;">0</div>
<div class="a" style="left:563px;top:410px;width:594px;height:24px;border-left:1px solid #b4b4b4;border-bottom:1px solid #b4b4b4;box-sizing:border-box"></div>
<div class="a" style="left:547px;top:417px;width:11px;height:11px;border:1px solid #a4a4a4;box-sizing:border-box;background:#fff"></div>
<div class="a" style="left:550px;top:422px;width:5px;height:1px;background:#333"></div>
<div class="a t" style="left:565.50px;top:415.00px;font-size:14.10px;line-height:14.10px;letter-spacing:0.000px;color:#3e3e3e;transform:scaleX(0.8970);transform-origin:0 0;">Regions</div>
<div class="a" style="left:584px;top:433px;width:573px;height:25px;border-left:1px solid #b4b4b4;border-bottom:1px solid #b4b4b4;box-sizing:border-box"></div>
<div class="a" style="left:568px;top:440px;width:11px;height:11px;border:1px solid #a4a4a4;box-sizing:border-box;background:#fff"></div>
<div class="a" style="left:571px;top:445px;width:5px;height:1px;background:#333"></div>
<div class="a t" style="left:586.50px;top:438.00px;font-size:14.10px;line-height:14.10px;letter-spacing:0.000px;color:#3e3e3e;transform:scaleX(0.9143);transform-origin:0 0;">Region 1</div>
<div class="a" style="left:605px;top:457px;width:552px;height:24px;border-left:1px solid #b4b4b4;border-bottom:1px solid #b4b4b4;box-sizing:border-box"></div>
<div class="a t" style="left:607.50px;top:462.00px;font-size:14.10px;line-height:14.10px;letter-spacing:0.000px;color:#3e3e3e;transform:scaleX(0.9389);transform-origin:0 0;">Type</div>
<div class="a" style="left:826px;top:457px;width:1px;height:23px;background:#b4b4b4"></div>
<div class="a t" style="left:829.60px;top:462.00px;font-size:14.10px;line-height:14.10px;letter-spacing:0.000px;color:#3e3e3e;transform:scaleX(0.8547);transform-origin:0 0;">Signal</div>
<div class="a" style="left:1136px;top:460px;width:18px;height:18px;background:#f3f3f3"></div>
<svg class="a" style="left:1139px;top:466px" width="11" height="6" viewBox="0 0 11 6"><path d="M0 0 L11 0 L5.5 6 Z" fill="#111"/></svg>
<div class="a" style="left:605px;top:480px;width:552px;height:24px;border-left:1px solid #b4b4b4;border-bottom:1px solid #b4b4b4;box-sizing:border-box"></div>
<div class="a t" style="left:607.50px;top:485.00px;font-size:14.10px;line-height:14.10px;letter-spacing:0.000px;color:#3e3e3e;transform:scaleX(0.8768);transform-origin:0 0;">Value</div>
<div class="a" style="left:826px;top:480px;width:1px;height:23px;background:#b4b4b4"></div>
<div class="a t" style="left:829.60px;top:485.00px;font-size:14.10px;line-height:14.10px;letter-spacing:0.000px;color:#3e3e3e;">0</div>
<div class="a" style="left:1136px;top:483px;width:18px;height:18px;background:#f3f3f3"></div>
<svg class="a" style="left:1139px;top:489px" width="11" height="6" viewBox="0 0 11 6"><path d="M0 0 L11 0 L5.5 6 Z" fill="#111"/></svg>
<div class="a" style="left:605px;top:503px;width:552px;height:25px;border-left:1px solid #b4b4b4;border-bottom:1px solid #b4b4b4;box-sizing:border-box"></div>
<div class="a t" style="left:607.50px;top:508.00px;font-size:14.10px;line-height:14.10px;letter-spacing:0.000px;color:#3e3e3e;transform:scaleX(0.8858);transform-origin:0 0;">Range</div>
<div class="a" style="left:826px;top:503px;width:1px;height:24px;background:#b4b4b4"></div>
<div class="a t" style="left:829.60px;top:508.00px;font-size:14.10px;line-height:14.10px;letter-spacing:0.000px;color:#3e3e3e;transform:scaleX(0.9374);transform-origin:0 0;">000-000</div>
<div class="a" style="left:1136px;top:506px;width:18px;height:19px;background:#f3f3f3"></div>
<svg class="a" style="left:1139px;top:512px" width="11" height="6" viewBox="0 0 11 6"><path d="M0 0 L11 0 L5.5 6 Z" fill="#111"/></svg>
<div class="a" style="left:500px;top:527px;width:657px;height:24px;border-left:1px solid #b4b4b4;border-bottom:1px solid #b4b4b4;box-sizing:border-box"></div>
<div class="a" style="left:500px;top:527px;width:657px;height:1px;background:#b4b4b4"></div>
<div class="a" style="left:484px;top:534px;width:11px;height:11px;border:1px solid #a4a4a4;box-sizing:border-box;background:#fff"></div>
<div class="a" style="left:487px;top:539px;width:5px;height:1px;background:#333"></div>
<div class="a t" style="left:502.50px;top:532.00px;font-size:14.10px;line-height:14.10px;letter-spacing:-0.083px;color:#3e3e3e;">Test 2</div>
<div class="a" style="left:521px;top:550px;width:636px;height:24px;border-left:1px solid #b4b4b4;border-bottom:1px solid #b4b4b4;box-sizing:border-box"></div>
<div class="a t" style="left:523.50px;top:555.00px;font-size:14.10px;line-height:14.10px;letter-spacing:0.000px;color:#3e3e3e;transform:scaleX(0.8746);transform-origin:0 0;">Key</div>
<div class="a" style="left:826px;top:550px;width:1px;height:23px;background:#b4b4b4"></div>
<div class="a" style="left:521px;top:573px;width:636px;height:25px;border-left:1px solid #b4b4b4;border-bottom:1px solid #b4b4b4;box-sizing:border-box"></div>
<div class="a" style="left:505px;top:580px;width:11px;height:11px;border:1px solid #a4a4a4;box-sizing:border-box;background:#fff"></div>
<div class="a" style="left:508px;top:585px;width:5px;height:1px;background:#333"></div>
<div class="a t" style="left:523.50px;top:578.00px;font-size:14.10px;line-height:14.10px;letter-spacing:0.000px;color:#3e3e3e;transform:scaleX(0.9733);transform-origin:0 0;">Targets</div>
<div class="a" style="left:542px;top:597px;width:615px;height:24px;border-left:1px solid #b4b4b4;border-bottom:1px solid #b4b4b4;box-sizing:border-box"></div>
<div class="a" style="left:526px;top:604px;width:11px;height:11px;border:1px solid #a4a4a4;box-sizing:border-box;background:#fff"></div>
<div class="a" style="left:529px;top:609px;width:5px;height:1px;background:#333"></div>
<div class="a t" style="left:544.50px;top:602.00px;font-size:14.10px;line-height:14.10px;letter-spacing:-0.020px;color:#3e3e3e;">Target 1</div>
<div class="a" style="left:563px;top:620px;width:594px;height:24px;border-left:1px solid #b4b4b4;border-bottom:1px solid #b4b4b4;box-sizing:border-box"></div>
<div class="a t" style="left:565.50px;top:625.00px;font-size:14.10px;line-height:14.10px;letter-spacing:0.000px;color:#3e3e3e;transform:scaleX(0.9389);transform-origin:0 0;">Type</div>
<div class="a" style="left:826px;top:620px;width:1px;height:23px;background:#b4b4b4"></div>
<div class="a t" style="left:829.60px;top:625.00px;font-size:14.10px;line-height:14.10px;letter-spacing:0.000px;color:#3e3e3e;transform:scaleX(0.9563);transform-origin:0 0;">report message (neovi fire2)</div>
<div class="a" style="left:1136px;top:623px;width:18px;height:18px;background:#f3f3f3"></div>
<svg class="a" style="left:1139px;top:629px" width="11" height="6" viewBox="0 0 11 6"><path d="M0 0 L11 0 L5.5 6 Z" fill="#111"/></svg>
<div class="a" style="left:563px;top:643px;width:594px;height:25px;border-left:1px solid #b4b4b4;border-bottom:1px solid #b4b4b4;box-sizing:border-box"></div>
<div class="a t" style="left:565.50px;top:648.00px;font-size:14.10px;line-height:14.10px;letter-spacing:0.000px;color:#3e3e3e;transform:scaleX(0.9534);transform-origin:0 0;">Network</div>
<div class="a" style="left:826px;top:643px;width:1px;height:24px;background:#b4b4b4"></div>
<div class="a t" style="left:829.60px;top:648.00px;font-size:14.10px;line-height:14.10px;letter-spacing:0.000px;color:#3e3e3e;transform:scaleX(0.8503);transform-origin:0 0;">HS CAN</div>
<div class="a" style="left:1136px;top:646px;width:18px;height:19px;background:#f3f3f3"></div>
<div class="a" style="left:1139px;top:654px;width:2px;height:2px;background:#222"></div>
<div class="a" style="left:1143px;top:654px;width:2px;height:2px;background:#222"></div>
<div class="a" style="left:1147px;top:654px;width:2px;height:2px;background:#222"></div>
<div class="a" style="left:563px;top:667px;width:594px;height:24px;border-left:1px solid #b4b4b4;border-bottom:1px solid #b4b4b4;box-sizing:border-box"></div>
<div class="a t" style="left:565.50px;top:672.00px;font-size:14.10px;line-height:14.10px;letter-spacing:0.000px;color:#3e3e3e;transform:scaleX(0.9144);transform-origin:0 0;">Period(s)</div>
<div class="a" style="left:826px;top:667px;width:1px;height:23px;background:#b4b4b4"></div>
<div class="a t" style="left:829.60px;top:672.00px;font-size:14.10px;line-height:14.10px;letter-spacing:0.000px;color:#3e3e3e;transform:scaleX(0.9847);transform-origin:0 0;">0.1</div>
<div class="a" style="left:563px;top:690px;width:594px;height:24px;border-left:1px solid #b4b4b4;border-bottom:1px solid #b4b4b4;box-sizing:border-box"></div>
<div class="a t" style="left:565.50px;top:695.00px;font-size:14.10px;line-height:14.10px;letter-spacing:0.000px;color:#3e3e3e;transform:scaleX(0.9576);transform-origin:0 0;">Jitter(s)</div>
<div class="a" style="left:826px;top:690px;width:1px;height:23px;background:#b4b4b4"></div>
<div class="a t" style="left:829.60px;top:695.00px;font-size:14.10px;line-height:14.10px;letter-spacing:0.000px;color:#3e3e3e;">0</div>
<div class="a" style="left:563px;top:713px;width:594px;height:25px;border-left:1px solid #b4b4b4;border-bottom:1px solid #b4b4b4;box-sizing:border-box"></div>
<div class="a" style="left:547px;top:720px;width:11px;height:11px;border:1px solid #a4a4a4;box-sizing:border-box;background:#fff"></div>
<div class="a" style="left:550px;top:725px;width:5px;height:1px;background:#333"></div>
<div class="a t" style="left:565.50px;top:718.00px;font-size:14.10px;line-height:14.10px;letter-spacing:0.000px;color:#3e3e3e;transform:scaleX(0.8970);transform-origin:0 0;">Regions</div>
<div class="a" style="left:584px;top:737px;width:573px;height:24px;border-left:1px solid #b4b4b4;border-bottom:1px solid #b4b4b4;box-sizing:border-box"></div>
<div class="a" style="left:568px;top:744px;width:11px;height:11px;border:1px solid #a4a4a4;box-sizing:border-box;background:#fff"></div>
<div class="a" style="left:571px;top:749px;width:5px;height:1px;background:#333"></div>
<div class="a t" style="left:586.50px;top:742.00px;font-size:14.10px;line-height:14.10px;letter-spacing:0.000px;color:#3e3e3e;transform:scaleX(0.9143);transform-origin:0 0;">Region 1</div>
<div class="a" style="left:605px;top:760px;width:552px;height:24px;border-left:1px solid #b4b4b4;border-bottom:1px solid #b4b4b4;box-sizing:border-box"></div>
<div class="a t" style="left:607.50px;top:765.00px;font-size:14.10px;line-height:14.10px;letter-spacing:0.000px;color:#3e3e3e;transform:scaleX(0.9389);transform-origin:0 0;">Type</div>
<div class="a" style="left:826px;top:760px;width:1px;height:23px;background:#b4b4b4"></div>
<div class="a t" style="left:829.60px;top:765.00px;font-size:14.10px;line-height:14.10px;letter-spacing:0.000px;color:#3e3e3e;transform:scaleX(0.8801);transform-origin:0 0;">Random</div>
<div class="a" style="left:1136px;top:763px;width:18px;height:18px;background:#f3f3f3"></div>
<svg class="a" style="left:1139px;top:769px" width="11" height="6" viewBox="0 0 11 6"><path d="M0 0 L11 0 L5.5 6 Z" fill="#111"/></svg>
<div class="a" style="left:605px;top:783px;width:552px;height:25px;border-left:1px solid #b4b4b4;border-bottom:1px solid #b4b4b4;box-sizing:border-box"></div>
<div class="a t" style="left:607.50px;top:788.00px;font-size:14.10px;line-height:14.10px;letter-spacing:0.000px;color:#3e3e3e;transform:scaleX(0.8768);transform-origin:0 0;">Value</div>
<div class="a" style="left:826px;top:783px;width:1px;height:24px;background:#b4b4b4"></div>
<div class="a t" style="left:829.60px;top:788.00px;font-size:14.10px;line-height:14.10px;letter-spacing:0.000px;color:#3e3e3e;">0</div>
<div class="a" style="left:605px;top:807px;width:552px;height:24px;border-left:1px solid #b4b4b4;border-bottom:1px solid #b4b4b4;box-sizing:border-box"></div>
<div class="a t" style="left:607.50px;top:812.00px;font-size:14.10px;line-height:14.10px;letter-spacing:0.000px;color:#3e3e3e;transform:scaleX(0.8858);transform-origin:0 0;">Range</div>
<div class="a" style="left:826px;top:807px;width:1px;height:23px;background:#b4b4b4"></div>
<div class="a t" style="left:829.60px;top:812.00px;font-size:14.10px;line-height:14.10px;letter-spacing:0.000px;color:#3e3e3e;transform:scaleX(0.9374);transform-origin:0 0;">000-000</div>
<div class="a" style="left:1136px;top:810px;width:18px;height:18px;background:#f3f3f3"></div>
<svg class="a" style="left:1139px;top:816px" width="11" height="6" viewBox="0 0 11 6"><path d="M0 0 L11 0 L5.5 6 Z" fill="#111"/></svg>
<div class="a" style="left:500px;top:830px;width:657px;height:24px;border-left:1px solid #b4b4b4;border-bottom:1px solid #b4b4b4;box-sizing:border-box"></div>
<div class="a" style="left:500px;top:830px;width:657px;height:1px;background:#b4b4b4"></div>
<div class="a" style="left:484px;top:837px;width:11px;height:11px;border:1px solid #a4a4a4;box-sizing:border-box;background:#fff"></div>
<div class="a" style="left:487px;top:842px;width:5px;height:1px;background:#333"></div>
<div class="a t" style="left:502.50px;top:835.00px;font-size:14.10px;line-height:14.10px;letter-spacing:-0.083px;color:#3e3e3e;">Test 3</div>
<div class="a" style="left:521px;top:853px;width:636px;height:24px;border-left:1px solid #b4b4b4;border-bottom:1px solid #b4b4b4;box-sizing:border-box"></div>
<div class="a t" style="left:523.50px;top:858.00px;font-size:14.10px;line-height:14.10px;letter-spacing:0.000px;color:#3e3e3e;transform:scaleX(0.8746);transform-origin:0 0;">Key</div>
<div class="a" style="left:826px;top:853px;width:1px;height:23px;background:#b4b4b4"></div>
<div class="a" style="left:500px;top:876px;width:657px;height:25px;border-left:1px solid #b4b4b4;border-bottom:1px solid #b4b4b4;box-sizing:border-box"></div>
<div class="a" style="left:500px;top:876px;width:657px;height:1px;background:#b4b4b4"></div>
<div class="a" style="left:484px;top:883px;width:11px;height:11px;border:1px solid #a4a4a4;box-sizing:border-box;background:#fff"></div>
<div class="a" style="left:487px;top:888px;width:5px;height:1px;background:#333"></div>
<div class="a t" style="left:502.50px;top:882.00px;font-size:14.10px;line-height:14.10px;letter-spacing:-0.083px;color:#3e3e3e;">Test 4</div>
<div class="a" style="left:521px;top:900px;width:636px;height:24px;border-left:1px solid #b4b4b4;border-bottom:1px solid #b4b4b4;box-sizing:border-box"></div>
<div class="a t" style="left:523.50px;top:905.00px;font-size:14.10px;line-height:14.10px;letter-spacing:0.000px;color:#3e3e3e;transform:scaleX(0.8746);transform-origin:0 0;">Key</div>
<div class="a" style="left:826px;top:900px;width:1px;height:23px;background:#b4b4b4"></div>
<svg class="a" style="left:493px;top:159px" width="26" height="37" viewBox="-1 -1 26 37">
<path d="M0.5 0.5 L0.5 31 L6.5 24.5 L10.5 33 L16.5 30.5 L12.5 22 L22.5 22 Z" fill="#fff" stroke="#111" stroke-width="1.6" stroke-linejoin="miter"/></svg>
<div class="a" style="left:1896px;top:125px;width:24px;height:923px;background:#fff"></div>
<div class="a" style="left:1897px;top:190px;width:23px;height:1px;background:#a8a8a8"></div>
<div class="a" style="left:1897px;top:252px;width:23px;height:1px;background:#a8a8a8"></div>
<div class="a" style="left:1897px;top:313px;width:23px;height:1px;background:#a8a8a8"></div>
<div class="a" style="left:1897px;top:375px;width:23px;height:1px;background:#a8a8a8"></div>
<div class="a" style="left:1897px;top:436px;width:23px;height:1px;background:#a8a8a8"></div>
<div class="a" style="left:1897px;top:498px;width:23px;height:1px;background:#a8a8a8"></div>
<div class="a" style="left:1897px;top:559px;width:23px;height:1px;background:#a8a8a8"></div>
<div class="a" style="left:1897px;top:620px;width:23px;height:1px;background:#a8a8a8"></div>
<div class="a" style="left:1897px;top:682px;width:23px;height:1px;background:#a8a8a8"></div>
<div class="a" style="left:1897px;top:743px;width:23px;height:1px;background:#a8a8a8"></div>
<div class="a" style="left:1897px;top:804px;width:23px;height:1px;background:#a8a8a8"></div>
<div class="a" style="left:1909px;top:158.7px;width:4px;height:4px;border-radius:2px;background:#111"></div>
<div class="a" style="left:1909px;top:220.1px;width:4px;height:4px;border-radius:2px;background:#111"></div>
<div class="a" style="left:1909px;top:281.5px;width:4px;height:4px;border-radius:2px;background:#111"></div>
<div class="a" style="left:1909px;top:342.9px;width:4px;height:4px;border-radius:2px;background:#111"></div>
<div class="a" style="left:1909px;top:404.3px;width:4px;height:4px;border-radius:2px;background:#111"></div>
<div class="a" style="left:1909px;top:465.7px;width:4px;height:4px;border-radius:2px;background:#111"></div>
<div class="a" style="left:1909px;top:527.1px;width:4px;height:4px;border-radius:2px;background:#111"></div>
<div class="a" style="left:1909px;top:588.5px;width:4px;height:4px;border-radius:2px;background:#111"></div>
<div class="a" style="left:1909px;top:649.9px;width:4px;height:4px;border-radius:2px;background:#111"></div>
<div class="a" style="left:1909px;top:711.3px;width:4px;height:4px;border-radius:2px;background:#111"></div>
<div class="a" style="left:1909px;top:772.7px;width:4px;height:4px;border-radius:2px;background:#111"></div>
<div class="a" style="left:1896px;top:1047px;width:24px;height:1px;background:#a8a8a8"></div>
<svg class="a" style="left:3px;top:1056px" width="20" height="15" viewBox="0 0 20 15">
<rect x="4" y="0" width="5" height="3" fill="#888"/><rect x="0" y="3" width="20" height="11" rx="2" fill="#4a4a4a"/>
<circle cx="10" cy="8.5" r="4" fill="#a8cff0" stroke="#ddd" stroke-width=".8"/></svg>
<div class="a" style="left:30px;top:1049px;width:1px;height:26px;background:#e4e4e4"></div>
<div class="a" style="left:206px;top:1049px;width:1px;height:26px;background:#e4e4e4"></div>
<div class="a" style="left:374px;top:1049px;width:1px;height:26px;background:#e4e4e4"></div>
<div class="a" style="left:541px;top:1049px;width:1px;height:26px;background:#e4e4e4"></div>
<div class="a" style="left:708px;top:1049px;width:1px;height:26px;background:#e4e4e4"></div>
<div class="a" style="left:875px;top:1049px;width:1px;height:26px;background:#e4e4e4"></div>
<div class="a" style="left:1042px;top:1049px;width:1px;height:26px;background:#e4e4e4"></div>
<div class="a" style="left:1208px;top:1049px;width:1px;height:26px;background:#a8a8a8"></div>
<div class="a" style="left:95.5px;top:1060px;width:4px;height:4px;border-radius:2px;background:#111"></div>
<div class="a t" style="left:112.50px;top:1056.00px;font-size:13.95px;line-height:13.95px;letter-spacing:1.044px;color:#858585;">(edit)</div>
<div class="a" style="left:267.0px;top:1060px;width:4px;height:4px;border-radius:2px;background:#111"></div>
<div class="a t" style="left:284.00px;top:1056.00px;font-size:13.95px;line-height:13.95px;letter-spacing:1.044px;color:#858585;">(edit)</div>
<div class="a" style="left:434.0px;top:1060px;width:4px;height:4px;border-radius:2px;background:#111"></div>
<div class="a t" style="left:451.00px;top:1056.00px;font-size:13.95px;line-height:13.95px;letter-spacing:1.044px;color:#858585;">(edit)</div>
<div class="a" style="left:601.0px;top:1060px;width:4px;height:4px;border-radius:2px;background:#111"></div>
<div class="a t" style="left:618.00px;top:1056.00px;font-size:13.95px;line-height:13.95px;letter-spacing:1.044px;color:#858585;">(edit)</div>
<div class="a" style="left:768.0px;top:1060px;width:4px;height:4px;border-radius:2px;background:#111"></div>
<div class="a t" style="left:785.00px;top:1056.00px;font-size:13.95px;line-height:13.95px;letter-spacing:1.044px;color:#858585;">(edit)</div>
<div class="a" style="left:935.0px;top:1060px;width:4px;height:4px;border-radius:2px;background:#111"></div>
<div class="a t" style="left:952.00px;top:1056.00px;font-size:13.95px;line-height:13.95px;letter-spacing:1.044px;color:#858585;">(edit)</div>
<div class="a" style="left:1102.0px;top:1060px;width:4px;height:4px;border-radius:2px;background:#111"></div>
<div class="a t" style="left:1119.00px;top:1056.00px;font-size:13.95px;line-height:13.95px;letter-spacing:1.044px;color:#858585;">(edit)</div>
<div class="a" style="left:1570px;top:1049px;width:350px;height:26px;border-left:1px solid #9a9a9a;border-top:1px solid #c8c8c8;box-sizing:border-box"></div>
<div class="a" style="left:1748px;top:1049px;width:1px;height:26px;background:#9a9a9a"></div>
<div class="a t" style="left:1625.70px;top:1055.00px;font-size:16.28px;line-height:16.28px;letter-spacing:1.109px;color:#6a6a6a;">3.9.3.17</div>
<div class="a t" style="left:1783.00px;top:1055.00px;font-size:16.28px;line-height:16.28px;letter-spacing:0.373px;color:#6a6a6a;">No Bus Errors</div>
</body></html>
